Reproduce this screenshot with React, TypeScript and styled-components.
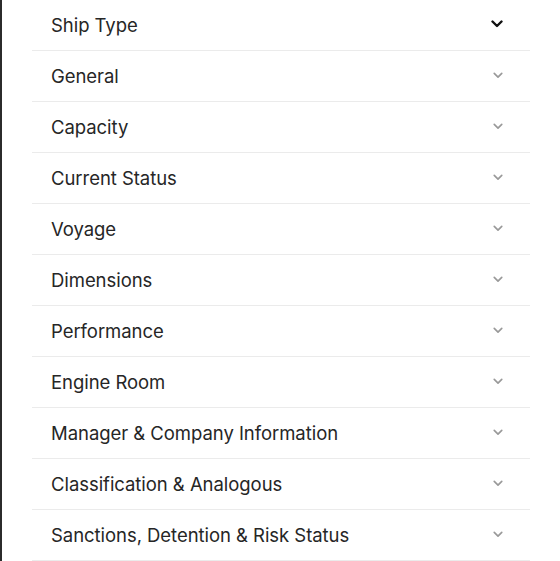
import styled, { createGlobalStyle } from 'styled-components';

const GlobalStyle = createGlobalStyle`
  html, body {
    margin: 0;
    padding: 0;
    background: #ffffff;
  }
`;

const Page = styled.div`
  min-height: 561px;
  box-sizing: border-box;
  border-left: 2px solid #2b2b2b;
  padding: 0 30px 0 30px;
  font-family: Inter, "Noto Sans", "Liberation Sans", sans-serif;
`;

const List = styled.div`
  display: flex;
  flex-direction: column;
`;

const Row = styled.div`
  display: flex;
  align-items: center;
  justify-content: space-between;
  height: 50px;
  border-bottom: 1px solid #ebebeb;
  padding: 0 27px 0 19px;
`;

const Title = styled.span`
  font-size: 18.5px;
  color: #262626;
  letter-spacing: -0.05px;
`;

const Chevron = styled.svg<{ $open?: boolean }>`
  width: ${(p) => (p.$open ? '12px' : '10px')};
  height: ${(p) => (p.$open ? '8px' : '7px')};
  margin-top: -2px;
  color: ${(p) => (p.$open ? '#111111' : '#999999')};
`;

const sections = [
  'Ship Type',
  'General',
  'Capacity',
  'Current Status',
  'Voyage',
  'Dimensions',
  'Performance',
  'Engine Room',
  'Manager & Company Information',
  'Classification & Analogous',
  'Sanctions, Detention & Risk Status',
];

export default function App() {
  return (
    <>
      <GlobalStyle />
      <Page>
        <List>
          {sections.map((name, i) => (
            <Row key={name}>
              <Title>{name}</Title>
              <Chevron $open={i === 0} viewBox="0 0 12 8" fill="none">
                <polyline
                  points="1.5,1.5 6,6 10.5,1.5"
                  stroke="currentColor"
                  strokeWidth={i === 0 ? 2.4 : 2}
                  strokeLinecap="round"
                  strokeLinejoin="round"
                />
              </Chevron>
            </Row>
          ))}
        </List>
      </Page>
    </>
  );
}
